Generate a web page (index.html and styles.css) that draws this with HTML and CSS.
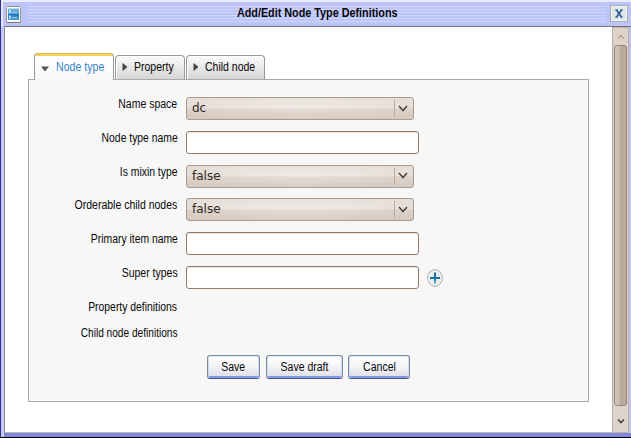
FILE: index.html
```
<!DOCTYPE html>
<html lang="en">
<head>
<meta charset="utf-8">
<title>Add/Edit Node Type Definitions</title>
<link rel="stylesheet" href="styles.css">
</head>
<body>
<div class="window">
  <header class="titlebar">
    <svg class="app-icon" width="16" height="18" viewBox="0 0 16 18">
      <defs><linearGradient id="blue" x2="0" y2="1"><stop stop-color="#77b8e4"/><stop offset=".48" stop-color="#4a9cd2"/><stop offset=".5" stop-color="#2472b5"/><stop offset="1" stop-color="#48a6da"/></linearGradient></defs>
      <rect x=".5" y=".5" width="14" height="16" rx="1" fill="#fafaf4" stroke="#96968f"/>
      <path d="M1 16.5h13.500" stroke="#77776e"/>
      <rect x="2" y="2.500" width="11" height="11.500" fill="url(#blue)"/>
      <path d="M3 4h2v3H3zM3 9.500h2v3H3z" fill="#b5def5"/>
      <path d="M6 6.500h5M6 11.500h5" stroke="#9ed3ef"/>
    </svg>
    <h1 class="title"><span class="t">Add/Edit Node Type Definitions</span></h1>
    <button class="close" aria-label="Close">
      <svg width="8" height="9" viewBox="0 0 8 9"><path d="M.3 1h2.400M5.300 1h2.400M.3 8h2.400M5.300 8h2.400" stroke="#327bb3" stroke-width="1.300"/><path d="M1.500 1l5 7M6.500 1l-5 7" stroke="#2f6194" stroke-width="1.700"/></svg>
    </button>
  </header>
  <div class="body">
    <main class="content">
      <nav class="tabs">
        <a class="tab active"><svg width="8" height="5" viewBox="0 0 8 5"><path d="M0 .5h8L4.500 5h-1z" fill="#555"/></svg><span class="t">Node type</span></a>
        <a class="tab second"><svg width="5" height="8" viewBox="0 0 5 8"><path d="M.5 0L5 3.500v1L.5 8z" fill="#444"/></svg><span class="t">Property</span></a>
        <a class="tab third"><svg width="5" height="8" viewBox="0 0 5 8"><path d="M.5 0L5 3.500v1L.5 8z" fill="#444"/></svg><span class="t">Child node</span></a>
      </nav>
      <section class="panel">
        <div class="row"><label><span class="t wide">Name space</span></label><div class="select"><span>dc</span><i class="arrow"><svg width="10" height="7" viewBox="0 0 10 7"><path d="M1 1l4 4.500L9 1" fill="none" stroke="#4b4540" stroke-width="1.500"/></svg></i></div></div>
        <div class="row"><label><span class="t">Node type name</span></label><input class="field" aria-label="Node type name"></div>
        <div class="row"><label><span class="t">Is mixin type</span></label><div class="select"><span>false</span><i class="arrow"><svg width="10" height="7" viewBox="0 0 10 7"><path d="M1 1l4 4.500L9 1" fill="none" stroke="#4b4540" stroke-width="1.500"/></svg></i></div></div>
        <div class="row"><label><span class="t wide">Orderable child nodes</span></label><div class="select"><span>false</span><i class="arrow"><svg width="10" height="7" viewBox="0 0 10 7"><path d="M1 1l4 4.500L9 1" fill="none" stroke="#4b4540" stroke-width="1.500"/></svg></i></div></div>
        <div class="row"><label><span class="t">Primary item name</span></label><input class="field" aria-label="Primary item name"></div>
        <div class="row"><label><span class="t wide">Super types</span></label><input class="field" aria-label="Super types">
          <svg class="add" width="16" height="18" viewBox="0 0 16 18"><defs><linearGradient id="teal" gradientUnits="userSpaceOnUse" x1="0" y1="3" x2="0" y2="15"><stop stop-color="#176f98"/><stop offset=".55" stop-color="#12779d"/><stop offset="1" stop-color="#55c9e2"/></linearGradient></defs><ellipse cx="8" cy="9" rx="7.400" ry="8.400" fill="#ededed" stroke="#b3b3b3"/><path d="M7 3.500h2V8h4v2H9v4.500H7V10H3V8h4z" fill="url(#teal)"/></svg>
        </div>
        <div class="row short"><label><span class="t">Property definitions</span></label></div>
        <div class="row short"><label><span class="t narrow">Child node definitions</span></label></div>
        <div class="actions">
          <button class="btn save"><span class="t">Save</span></button>
          <button class="btn draft"><span class="t">Save draft</span></button>
          <button class="btn cancel"><span class="t">Cancel</span></button>
        </div>
      </section>
    </main>
    <div class="scrollbar">
      <div class="step"><svg width="8" height="5" viewBox="0 0 8 5"><path d="M1 4.500l3-3 3 3" fill="none" stroke="#b6a698" stroke-width="1.500"/></svg></div>
      <div class="thumb"></div>
      <div class="step down"><svg width="8" height="5" viewBox="0 0 8 5"><path d="M1 .5l3 3 3-3" fill="none" stroke="#4b4540" stroke-width="1.600"/></svg></div>
    </div>
  </div>
</div>
</body>
</html>
```
FILE: styles.css
```
* { box-sizing: border-box; }
body { margin: 0; background: #000; font: 12.5px/14px "Liberation Sans", Arial, sans-serif; color: #080808; overflow: hidden; }
.window { width: 631px; height: 437px; display: flex; flex-direction: column; background: #bdc5f8; border-left: 1px solid #30309b; }
.titlebar { height: 26px; flex: none; display: flex; padding: 0 3px 0 5px; border-top: 2px solid #e9edff; box-shadow: inset 2px 0 #e5e9ff; }
.app-icon { flex: none; margin-top: 4px; }
.title {
  flex: 1; margin: 4px 4px 4px 6px; height: 16px; text-align: center; font-size: 12px; line-height: 14px;
  background: repeating-linear-gradient(#ced4fc 0 1px, #bdc5f8 1px 3px);
}
.t { display: inline-block; white-space: nowrap; transform: scaleX(.84); transform-origin: center; }
.title .t { transform: scaleX(.9); }
.close { width: 18px; height: 17px; margin: 3px 0 0; padding: 0; border: 1px solid #a6afb8; background: #e2e6e7; display: flex; align-items: center; justify-content: center; box-shadow: inset 0 0 0 1px #f2f4f4; }
.body { flex: 1; min-height: 0; display: flex; margin-left: 3px; border-top: 1px solid #747474; border-left: 1px solid #898994; border-bottom: 4px solid #8087dd; box-shadow: -2px 0 #c8cdf8; }
.content { flex: 1; background: #fff; padding: 26px 23px 0; border-bottom: 1px solid #bbb8bd; }
.tabs { height: 26px; display: flex; align-items: flex-end; padding-left: 6px; gap: 1px; position: relative; z-index: 1; }
.tab { height: 24px; display: flex; align-items: center; padding-bottom: 1px; border: 1px solid #999; border-bottom: 0; border-radius: 4px 4px 0 0; background: linear-gradient(#fbfbfb, #d5d5d5); box-shadow: inset 1px 1px #fff; }
.tab svg { flex: none; }
.tab.active { width: 80px; height: 27px; margin-bottom: -1px; padding: 1px 0 0 6px; border-top: 0; color: #3984ce; background: linear-gradient(#d7b758 0 1px, #f8cf59 1px 3px, #fff 3px, #f7f7f7); box-shadow: none; }
.tab.active svg { margin-top: 3px; }
.tab .t { margin-left: 7px; transform-origin: left; }
.tab.active .t { transform: scaleX(.85); }
.tab.second { width: 70px; padding-left: 6px; }
.tab.third { width: 79px; padding-left: 6px; }
.panel { width: 561px; height: 323px; padding: 17px 0 0; border: 1px solid #aaa; background: #f7f7f7; }
.row { height: 33.75px; display: flex; }
.row label { width: 148.4px; margin-right: 8.6px; text-align: right; }
.row label .t { transform-origin: right; transform: scaleX(.83); }
.row label .wide { transform: scaleX(.84); }
.row label .narrow { transform: scaleX(.81); }
.row.short { height: 26px; }
.field { width: 233px; height: 23px; border: 1px solid #8e7b6b; border-radius: 3px; background: #fff; box-shadow: inset 0 1px #e9e4e0; outline: 0; }
.select { width: 228px; height: 23px; display: flex; align-items: center; justify-content: space-between; padding: 0 0 0 5px; border: 1px solid #ab9b8e; border-radius: 3px; color: #2e2b29; font: 12px/15px "DejaVu Sans", sans-serif; background: linear-gradient(#fff4, #fff3 49%, #c9b6a830 51%, #c9b6a850), radial-gradient(ellipse at center, #ece6e1, #ddd2ca 90%); }
.arrow { width: 19px; height: 17px; display: flex; align-items: center; justify-content: center; border-left: 1px solid #b9aca1; padding: 0 1px 1px 0; }
.add { margin: 3px 0 0 8px; }
.actions { display: flex; padding-left: 178px; margin-top: 3px; }
.btn { height: 24px; padding: 0; font: 12.5px/14px "Liberation Sans", Arial, sans-serif; color: #080808; border: 1px solid #858b96; border-bottom-color: #4c5480; border-radius: 3px; background: linear-gradient(#fff, #f5f5f8 45%, #dcdce5); box-shadow: inset 0 1px #d8ecff, inset 1px 0 #c9d9fb, inset -1px 0 #c9d9fb, inset 0 -2px #7f99e8; }
.btn.save { width: 53px; margin-right: 6px; }
.btn.draft { width: 77px; margin-right: 5px; }
.btn.cancel { width: 62px; }
.scrollbar { width: 17px; margin-right: 2px; display: flex; flex-direction: column; align-items: center; background: #ddd3ca; border: 1px solid #bdafa5; border-radius: 2px; }
.step { height: 17px; display: flex; align-items: center; }
.step.down { height: 26px; padding-top: 4px; }
.thumb { flex: 1; width: 13px; border: 1px solid #948578; border-radius: 3px; background: linear-gradient(90deg, #d4c8bd, #c8b9ac 45%, #baa999 50%, #bcab9d); }
```
